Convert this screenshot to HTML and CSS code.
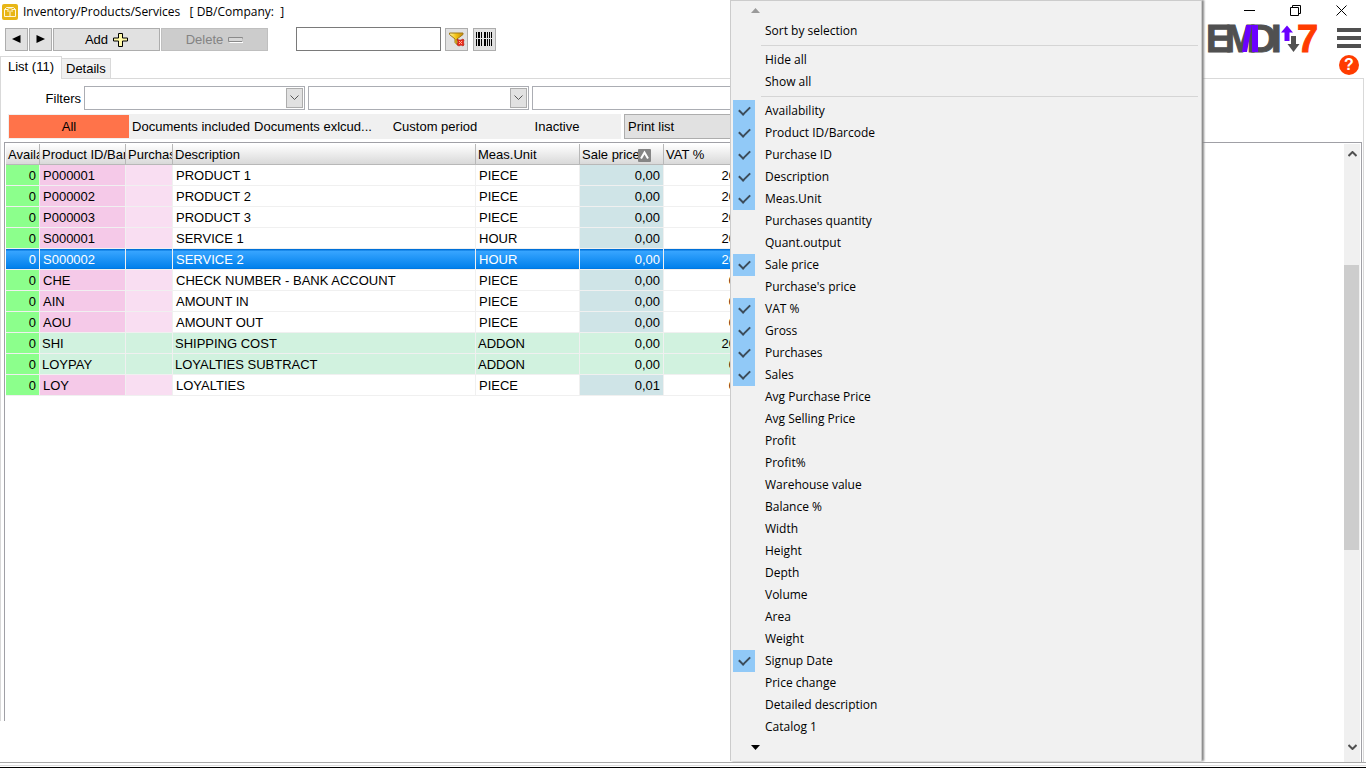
FILE: index.html
```html
<!DOCTYPE html>
<html lang="en">
<head>
<meta charset="utf-8">
<title>Inventory/Products/Services</title>
<link rel="stylesheet" href="styles.css">
</head>
<body>
<div class="window">
  <header class="top">
    <div class="top-left">
      <div class="titlebar">
        <svg class="app-icon" width="16" height="16" viewBox="0 0 16 16"><rect width="16" height="16" rx="2" fill="#e8b616"/><path d="M2.500 5.500l2-2h7l2 2v7h-11zM2.500 5.500h3.500l2-2 2 2h3.500M6 5.500v2.500M10 5.500v2.500M8 6.500v6" fill="none" stroke="#fff6d8"/></svg>
        <h1 class="title">Inventory/Products/Services &nbsp; [ DB/Company: &nbsp;]</h1>
      </div>
      <div class="toolbar">
        <button class="btn btn-nav" aria-label="Previous"><svg width="9" height="8" viewBox="0 0 9 8"><path d="M8.500 0v8L0 4z"/></svg></button>
        <button class="btn btn-nav" aria-label="Next"><svg width="9" height="8" viewBox="0 0 9 8"><path d="M.5 0v8L9 4z"/></svg></button>
        <button class="btn btn-wide">Add <svg width="15" height="14" viewBox="0 0 15 14"><path d="M5.500.5h4v4.500h5v3h-5v5.500h-4V8h-5V5h5z" fill="#fff9a8" stroke="#000"/></svg></button>
        <button class="btn btn-wide" disabled>Delete <svg width="15" height="6" viewBox="0 0 15 6"><path d="M.5.5h14v4H.5z" fill="#d6d6d6" stroke="#8a8a8a"/><path d="M1.500 5.500h13.500v-4" fill="none" stroke="#fff"/></svg></button>
        <input class="search" type="text" aria-label="Search">
        <button class="btn btn-icon" aria-label="Clear filter">
          <svg width="18" height="18" viewBox="0 0 18 18"><defs><linearGradient id="gold"><stop offset="0" stop-color="#fff7a0"/><stop offset=".5" stop-color="#f2c010"/><stop offset="1" stop-color="#c58a10"/></linearGradient></defs><path d="M1.500 3h13.500v1.500L9 9v5.500l-2-2V9L1.500 4.500z" fill="url(#gold)" stroke="#a07818"/><path d="M9 9l2 1h2l2-1 1 1-.5 2 .5 3-1 1-2-1-2 1-2-1 1-3z" fill="#ee2d1c" stroke="#a51a10" stroke-width=".6"/><path d="M11 11l3 3M14 11l-3 3" stroke="#ffb09c"/></svg>
        </button>
        <button class="btn btn-icon" aria-label="Barcode">
          <svg width="17" height="14" viewBox="0 0 17 14"><path d="M0 0h1v14H0zM2 0h2v14H2zM5 0h1v14H5zM8 0h2v14H8zM11 0h1v14h-1zM13 0h1v14h-1zM15 0h1v14h-1z"/><path d="M0 6h17v1H0z" fill="#e1e1e1"/></svg>
        </button>
      </div>
      <nav class="tabs">
        <button class="tab tab-active">List (11)</button>
        <button class="tab">Details</button>
      </nav>
    </div>
    <div class="top-right">
      <div class="window-controls">
        <button class="ctl" aria-label="Minimize"><svg width="11" height="11" viewBox="0 0 11 11"><path d="M0 5.500h11"/></svg></button>
        <button class="ctl" aria-label="Restore"><svg width="11" height="11" viewBox="0 0 11 11"><path d="M.5 2.500h8v8h-8zM2.500 2.500v-2h8v8h-2"/></svg></button>
        <button class="ctl" aria-label="Close"><svg width="11" height="11" viewBox="0 0 11 11"><path d="M.5.5l10 10M10.500.5l-10 10"/></svg></button>
      </div>
      <div class="brand">
        <svg class="logo" width="112" height="30" viewBox="0 0 112 30" role="img" aria-label="EMDI 7">
          <text class="logo-text" y="28"><tspan x="0">E</tspan><tspan x="19">M</tspan><tspan x="43">D</tspan><tspan x="65">I</tspan></text>
          <path d="M40 1h6l-5 27h-5z" fill="#6a00ff"/>
          <path d="M46 1h6v27h-6z" fill="#6a00ff"/>
          <path d="M81 1.500l6 7h-3.500v8.500h-5V8.500H75z" fill="#6a00ff"/>
          <path d="M85 12h5v8h3.500l-6 8-6-8H85z" fill="#505050"/>
          <text class="logo-text logo-seven" x="91" y="28">7</text>
        </svg>
        <div class="side-actions">
          <button class="plain" aria-label="Menu"><svg width="24" height="21" viewBox="0 0 24 21"><path d="M0 0h24v4H0zM0 8h24v4H0zM0 16h24v4H0z" fill="#505050"/></svg></button>
          <button class="help" aria-label="Help">?</button>
        </div>
      </div>
    </div>
  </header>

  <main class="panel">
    <div class="filters">
      <label class="filters-label" for="filter-a">Filters</label>
      <span class="combo"><select id="filter-a"><option></option></select><span class="combo-arrow"><svg width="9" height="6" viewBox="0 0 9 6"><path d="M.5.500l4 4 4-4"/></svg></span></span>
      <span class="combo"><select aria-label="Second filter"><option></option></select><span class="combo-arrow"><svg width="9" height="6" viewBox="0 0 9 6"><path d="M.5.500l4 4 4-4"/></svg></span></span>
      <span class="combo"><select aria-label="Third filter"><option></option></select><span class="combo-arrow"><svg width="9" height="6" viewBox="0 0 9 6"><path d="M.5.500l4 4 4-4"/></svg></span></span>
    </div>
    <div class="views">
      <div class="strip">
        <button class="view view-active">All</button>
        <button class="view">Documents included</button>
        <button class="view">Documents exlcud...</button>
        <button class="view">Custom period</button>
        <button class="view">Inactive</button>
      </div>
      <button class="btn print">Print list</button>
    </div>
    <div class="grid">
      <div class="grid-body">
        <table>
          <colgroup><col class="c-avail"><col class="c-id"><col class="c-purchase"><col class="c-desc"><col class="c-unit"><col class="c-price"><col class="c-vat"></colgroup>
          <thead><tr><th>Availability</th><th>Product ID/Barcode</th><th>Purchase ID</th><th>Description</th><th>Meas.Unit</th><th><span class="sorted">Sale price<svg width="13" height="13" viewBox="0 0 13 13"><rect width="13" height="13" rx="1" fill="#858585"/><path d="M3 9.500l3.500-6 3.500 6" fill="none" stroke="#fff" stroke-width="2"/></svg></span></th><th>VAT %</th></tr></thead>
          <tbody>
            <tr><td>0</td><td>P000001</td><td></td><td>PRODUCT 1</td><td>PIECE</td><td>0,00</td><td>20,00</td></tr>
            <tr><td>0</td><td>P000002</td><td></td><td>PRODUCT 2</td><td>PIECE</td><td>0,00</td><td>20,00</td></tr>
            <tr><td>0</td><td>P000003</td><td></td><td>PRODUCT 3</td><td>PIECE</td><td>0,00</td><td>20,00</td></tr>
            <tr><td>0</td><td>S000001</td><td></td><td>SERVICE 1</td><td>HOUR</td><td>0,00</td><td>20,00</td></tr>
            <tr class="selected"><td>0</td><td>S000002</td><td></td><td>SERVICE 2</td><td>HOUR</td><td>0,00</td><td>20,00</td></tr>
            <tr><td>0</td><td>CHE</td><td></td><td>CHECK NUMBER - BANK ACCOUNT</td><td>PIECE</td><td>0,00</td><td>0,00</td></tr>
            <tr><td>0</td><td>AIN</td><td></td><td>AMOUNT IN</td><td>PIECE</td><td>0,00</td><td>0,00</td></tr>
            <tr><td>0</td><td>AOU</td><td></td><td>AMOUNT OUT</td><td>PIECE</td><td>0,00</td><td>0,00</td></tr>
            <tr class="addon"><td>0</td><td>SHI</td><td></td><td>SHIPPING COST</td><td>ADDON</td><td>0,00</td><td>20,00</td></tr>
            <tr class="addon"><td>0</td><td>LOYPAY</td><td></td><td>LOYALTIES SUBTRACT</td><td>ADDON</td><td>0,00</td><td>0,00</td></tr>
            <tr><td>0</td><td>LOY</td><td></td><td>LOYALTIES</td><td>PIECE</td><td>0,01</td><td>0,00</td></tr>
          </tbody>
        </table>
      </div>
      <div class="scrollbar">
        <svg width="9" height="6" viewBox="0 0 9 6"><path d="M.5 5l4-4 4 4"/></svg>
        <div class="track"><div class="thumb"></div></div>
        <svg width="9" height="6" viewBox="0 0 9 6"><path d="M.5 1l4 4 4-4"/></svg>
      </div>
    </div>
  </main>
  <footer class="edge"></footer>

  <div class="menu">
    <div class="menu-scroll"><svg width="9" height="5" viewBox="0 0 9 5"><path d="M0 5l4.500-5L9 5z" fill="#9a9a9a"/></svg></div>
    <button class="menu-item">Sort by selection</button>
    <hr>
    <button class="menu-item">Hide all</button>
    <button class="menu-item">Show all</button>
    <hr>
    <label class="menu-item"><input type="checkbox" checked>Availability</label>
    <label class="menu-item"><input type="checkbox" checked>Product ID/Barcode</label>
    <label class="menu-item"><input type="checkbox" checked>Purchase ID</label>
    <label class="menu-item"><input type="checkbox" checked>Description</label>
    <label class="menu-item"><input type="checkbox" checked>Meas.Unit</label>
    <label class="menu-item"><input type="checkbox">Purchases quantity</label>
    <label class="menu-item"><input type="checkbox">Quant.output</label>
    <label class="menu-item"><input type="checkbox" checked>Sale price</label>
    <label class="menu-item"><input type="checkbox">Purchase's price</label>
    <label class="menu-item"><input type="checkbox" checked>VAT %</label>
    <label class="menu-item"><input type="checkbox" checked>Gross</label>
    <label class="menu-item"><input type="checkbox" checked>Purchases</label>
    <label class="menu-item"><input type="checkbox" checked>Sales</label>
    <label class="menu-item"><input type="checkbox">Avg Purchase Price</label>
    <label class="menu-item"><input type="checkbox">Avg Selling Price</label>
    <label class="menu-item"><input type="checkbox">Profit</label>
    <label class="menu-item"><input type="checkbox">Profit%</label>
    <label class="menu-item"><input type="checkbox">Warehouse value</label>
    <label class="menu-item"><input type="checkbox">Balance %</label>
    <label class="menu-item"><input type="checkbox">Width</label>
    <label class="menu-item"><input type="checkbox">Height</label>
    <label class="menu-item"><input type="checkbox">Depth</label>
    <label class="menu-item"><input type="checkbox">Volume</label>
    <label class="menu-item"><input type="checkbox">Area</label>
    <label class="menu-item"><input type="checkbox">Weight</label>
    <label class="menu-item"><input type="checkbox" checked>Signup Date</label>
    <label class="menu-item"><input type="checkbox">Price change</label>
    <label class="menu-item"><input type="checkbox">Detailed description</label>
    <label class="menu-item"><input type="checkbox">Catalog 1</label>
    <div class="menu-scroll"><svg width="9" height="5" viewBox="0 0 9 5"><path d="M0 0h9L4.500 5z"/></svg></div>
  </div>
</div>
</body>
</html>
```
FILE: styles.css
```css
* { box-sizing: border-box; }
body { margin: 0; background: #fff; color: #000; font: 13px/16px "Liberation Sans", Arial, sans-serif; }
button, select, input { font: inherit; color: inherit; margin: 0; }
button { padding: 0; }
svg { display: block; flex: none; }

.window { position: relative; display: flex; flex-direction: column; height: 100vh; overflow: hidden; }

/* Title, toolbar, brand */
.top { display: flex; justify-content: space-between; height: 78px; }
.top-left { display: flex; flex-direction: column; }
.titlebar { display: flex; align-items: center; gap: 5px; height: 24px; padding-left: 2px; }
.title { margin: 0; font: 12px/16px "Open Sans", "Noto Sans", sans-serif; white-space: nowrap; }
.toolbar { display: flex; align-items: center; gap: 1px; height: 30px; padding-left: 5px; }
.btn { display: flex; align-items: center; justify-content: center; gap: 5px; height: 23px; border: 1px solid #adadad; background: #e1e1e1; }
.btn-nav, .btn-icon { width: 23px; }
.btn-icon + .btn-icon { margin-left: 4px; }
.btn-wide { width: 107px; padding-top: 2px; }
.btn:disabled { background: #ccc; border-color: #bfbfbf; color: #838383; }
.search { width: 145px; height: 24px; margin: 0 3px 0 27px; border: 1px solid #7a7a7a; background: #fff; }
.tabs { display: flex; align-items: flex-end; flex: 1; }
.tab { height: 20px; padding: 0 4px; border: 1px solid #d9d9d9; border-bottom: 0; border-left: 0; background: #f0f0f0; }
.tab-active { z-index: 1; height: 23px; margin-bottom: -1px; padding: 0 7px 3px; border-left: 1px solid #d9d9d9; background: #fff; }

.top-right { display: flex; flex-direction: column; padding-right: 5px; }
.window-controls { display: flex; justify-content: flex-end; gap: 35px; padding: 5px 14px 8px 0; }
.ctl, .plain { border: 0; background: none; }
.ctl path { fill: none; stroke: #000; }
.brand { display: flex; gap: 19px; }
.logo { overflow: visible; }
.logo-text { font: bold 38px "Liberation Sans Narrow", "Liberation Sans", sans-serif; fill: #505050; stroke: #505050; }
.logo-text.logo-seven { fill: #ff3c00; stroke: #ff3c00; }
.side-actions { display: flex; flex-direction: column; align-items: center; gap: 6px; padding-top: 4px; }
.help { width: 20px; height: 20px; border: 0; border-radius: 50%; background: #ff3c00; color: #fff; font: bold 16px/20px "Liberation Sans", sans-serif; }

/* Panel */
.panel { display: flex; flex: 1; flex-direction: column; min-height: 0; margin-right: 2px; padding: 7px 1px 0 4px; border-top: 1px solid #d9d9d9; border-right: 1px solid #d9d9d9; background: linear-gradient(#d9d9d9, #d9d9d9) 0 0 / 1px calc(100% - 41px) no-repeat; }
.filters { display: flex; align-items: center; gap: 3px; }
.filters-label { width: 77px; padding-top: 2px; text-align: right; }
.combo { position: relative; width: 221px; height: 24px; }
.combo select { display: block; width: 100%; height: 100%; border: 1px solid #abadb3; border-radius: 0; background: #fff; appearance: none; }
.combo-arrow { position: absolute; top: 2px; right: 2px; display: flex; align-items: center; justify-content: center; width: 17px; height: 20px; border: 1px solid #adadad; background: #e1e1e1; pointer-events: none; }
.combo-arrow path { fill: none; stroke: #555; }
.views { display: flex; gap: 3px; padding: 4px 0 3px 4px; }
.strip { display: flex; gap: 2px; width: 613px; height: 25px; padding: 1px; background: #f0f0f0; }
.view { flex: none; width: 120px; border: 0; background: none; white-space: nowrap; }
.view-active { background: #ff734a; }
.print { justify-content: flex-start; width: 180px; height: 25px; padding-left: 3px; }

/* Data grid */
.grid { display: flex; flex: 1; min-height: 0; border-top: 1px solid #a0a0a6; border-right: 1px solid #a0a0a6; padding: 1px 1px 0 2px; background: linear-gradient(#a0a0a6, #a0a0a6) 0 0 / 1px calc(100% - 41px) no-repeat; }
.grid-body { flex: 1; min-width: 0; overflow: hidden; }
table { width: 752px; border-collapse: separate; border-spacing: 0; table-layout: fixed; }
.c-avail { width: 34px; }
.c-id { width: 86px; }
.c-purchase { width: 47px; }
.c-desc { width: 303px; }
.c-unit { width: 104px; }
.c-price { width: 84px; }
.c-vat { width: 94px; }
th, td { height: 21px; padding: 2px 3px 0; overflow: hidden; border-right: 1px solid #f0f0f0; border-bottom: 1px solid #f0f0f0; text-align: left; white-space: nowrap; }
th { padding: 2px 0 0 2px; border-color: #b8b8b8; background: linear-gradient(#fff, #d9d9d9); font-weight: normal; }
.sorted { display: flex; align-items: center; }
.sorted svg { margin-left: -2px; }
td:first-child { background: #8cff8c; }
td:nth-child(2) { background: #f5c9e8; }
td:nth-child(3) { background: #f9def2; }
td:nth-child(6) { background: #cfe4e7; }
td:first-child, td:nth-child(n+6) { text-align: right; }
.addon td:not(:first-child) { padding-left: 2px; background: #d1f2df; }
.selected td:nth-child(n) { background: linear-gradient(#0070d8 1px, #38a5ff 2px, #0080ec 19px, #0070d8 20px); color: #fff; }

.scrollbar { display: flex; flex-direction: column; align-items: center; width: 16px; padding: 7px 0 12px; background: #f0f0f0; }
.scrollbar path { fill: none; stroke: #505050; stroke-width: 2; }
.track { flex: 1; align-self: stretch; padding: 108px 1px 0 0; }
.thumb { height: 285px; background: #cdcdcd; }
.edge { height: 6px; border-top: 1px solid #a8a8a8; border-bottom: 1px solid #000; background: linear-gradient(#fff 2px, #dcdcdc 2px, #dcdcdc 3px, #fff 3px); }

/* Column menu */
.menu { position: absolute; top: 0; left: 730px; width: 472px; padding: 0 3px 0 2px; border: 1px solid #ccc; border-bottom: 0; background: #f1f1f1; box-shadow: 2px 0 2px #888; font: 12px/22px "Open Sans", "Noto Sans", sans-serif; }
.menu-item { display: flex; align-items: center; width: 100%; height: 22px; padding: 0; border: 0; background: none; }
button.menu-item { padding-left: 32px; }
.menu-item input { display: flex; align-items: center; justify-content: center; width: 22px; height: 22px; margin-right: 10px; appearance: none; }
.menu-item input:checked { background: #91c9f7; }
.menu-item input:checked::before { content: ""; width: 9px; height: 5px; margin-bottom: 3px; border: solid #3c4c5a; border-width: 0 0 2px 2px; transform: rotate(-45deg); }
.menu hr { height: 1px; margin: 3px 0 3px 28px; border: 0; background: #d5d5d5; }
.menu-scroll { height: 19px; padding: 7px 0 0 18px; }
.menu-scroll:last-child { height: 23px; }
```
